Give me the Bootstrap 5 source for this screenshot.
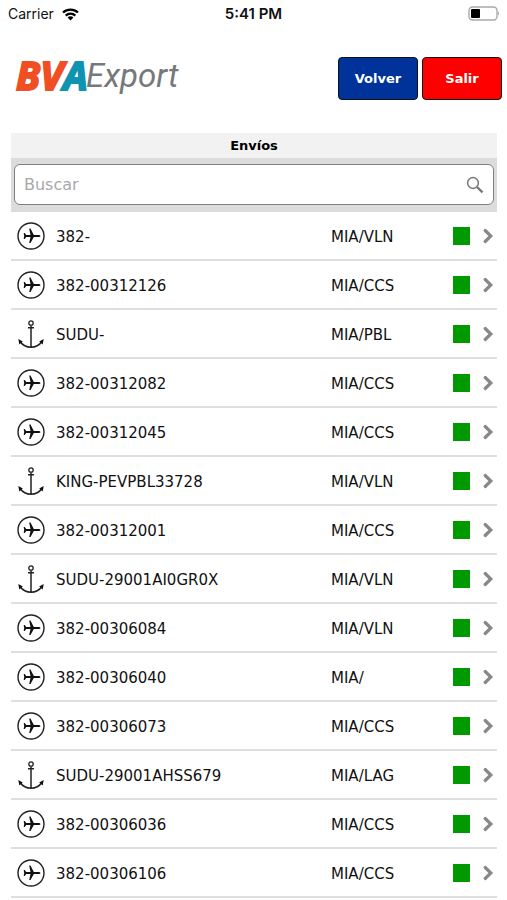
<!DOCTYPE html>
<html lang="es">
<head>
<meta charset="utf-8">
<meta name="viewport" content="width=device-width, initial-scale=1">
<title>BVA Export – Envíos</title>
<link href="https://cdn.jsdelivr.net/npm/bootstrap@5.3.0/dist/css/bootstrap.min.css" rel="stylesheet">
<style>
body { font-family: "DejaVu Sans", Verdana, sans-serif; font-size: 15px; line-height: 20px; color: #111; background: #fff; }
.status-bar { font-family: Inter, sans-serif; font-size: 14px; height: 28px; padding: 0 8px; }
.status-bar > * { flex: 1 1 0; }
.status-time { font-size: 15px; font-weight: 600; }
.app-header { padding: 20px 5px 0 14px; }
.logo-mark { font-family: "Liberation Sans Narrow", "Open Sans", sans-serif; font-size: 39px; font-weight: 700; font-style: italic; stroke-width: 2; }
.logo-word { font-family: Roboto, sans-serif; font-size: 33px; font-style: italic; }
.brand-orange { fill: #f04e23; stroke: #f04e23; }
.brand-teal { fill: #0e93b0; stroke: #0e93b0; }
.btn-app { width: 80px; height: 43px; padding: 0; border: 1px solid #111; border-radius: 4px; font-size: 13px; font-weight: 700; color: #fff; }
.btn-back { background: #039; }
.btn-exit { background: #f00; }
.shipments { margin: 24px 10px 0 11px; }
.panel-title { background: #f2f2f2; font-size: 13px; font-weight: 700; line-height: 25px; margin: 0; color: #000; }
.search-area { background: #dcdcdc; padding: 6px 3px 7px; }
.search-box { height: 41px; background: #fff; border: 1px solid #808080; border-radius: 6px; padding: 0 9px; }
.search-box input { font-size: 16px; line-height: 24px; height: 28px; outline: 0; color: #111; }
.search-box input::placeholder { color: #a9a9a9; opacity: 1; }
.list-group-flush > .shipment, .list-group-flush > .shipment:last-child { height: 49px; padding: 0 3px 0 6px; border-width: 0 0 2px; border-color: #dfdfdf; color: #111; }
.shipment .number { margin-left: 11px; padding-top: 3px; }
.shipment .route { width: 122px; padding-top: 3px; }
.state { width: 17px; height: 18px; background: #090; margin-right: 13px; }
</style>
</head>
<body>
<svg class="d-none" aria-hidden="true">
  <symbol id="plane" viewBox="0 0 28 28">
    <circle cx="14" cy="14" r="13" fill="none" stroke="#222" stroke-width="1.4"/>
    <path fill="#111" d="M23.500 14c0 .7-1 1.100-2.200 1.100h-4.500L13.500 21H12.200l1.300-5.900H9.200L7.700 17H6.700l.5-3-.5-3h1L9.200 12.900h4.300L12.200 6.500h1.300l3.300 6.400h4.500c1.200 0 2.200.4 2.200 1.100z"/>
  </symbol>
  <symbol id="anchor" viewBox="0 0 28 28">
    <g fill="none" stroke="#222">
      <circle cx="14" cy="3" r="2.200" stroke-width="1.300"/>
      <path stroke-width="1.500" d="M14 5.500v21.500M11 7.800h6M3 21.500c2.500 3.500 6.500 5.700 11 5.700s8.500-2.200 11-5.700"/>
    </g>
    <path fill="#111" d="M1.300 19l4.500 2.600-3.500 2.800zM26.700 19l-4.500 2.600 3.500 2.800z"/>
  </symbol>
  <symbol id="chevron" viewBox="0 0 11 16">
    <path d="M2.200 2.500l5.600 5.500-5.600 5.500" fill="none" stroke="#888" stroke-width="3.200" stroke-linecap="round"/>
  </symbol>
</svg>

<div class="status-bar d-flex align-items-center">
  <div class="d-flex align-items-center gap-2">Carrier
    <svg width="17" height="13" viewBox="0 0 17 13" fill="none" stroke="#000" stroke-width="2.300" aria-label="Wi-Fi"><path d="M1 4.500a11 11 0 0 1 15 0M3.700 7.600a7 7 0 0 1 9.600 0"/><path d="M8.500 12.500l-2.900-2.900a4 4 0 0 1 5.800 0z" fill="#000" stroke="none"/></svg>
  </div>
  <div class="status-time text-center">5:41 PM</div>
  <div class="d-flex justify-content-end">
    <svg width="31" height="16" viewBox="0 0 31 16" aria-label="Batería"><rect x="1" y="1" width="28" height="13" rx="3.500" fill="none" stroke="#aaa" stroke-width="1.400"/><rect x="3" y="3" width="9" height="9" rx="1" fill="#000"/><path d="M30 5.500v4c1-.4 1.300-3.600 0-4z" fill="#999"/></svg>
  </div>
</div>

<header class="app-header d-flex justify-content-between align-items-center">
  <svg width="176" height="61" viewBox="0 0 176 61" role="img" aria-label="BVA Export">
    <text class="logo-mark" x="2" y="42"><tspan class="brand-orange">BV</tspan><tspan class="brand-teal">A</tspan></text>
    <text class="logo-word" x="72" y="39" fill="#77787b">Export</text>
  </svg>
  <div class="d-flex gap-1">
    <button type="button" class="btn btn-app btn-back">Volver</button>
    <button type="button" class="btn btn-app btn-exit">Salir</button>
  </div>
</header>

<main class="shipments">
  <h1 class="panel-title text-center">Envíos</h1>
  <div class="search-area">
    <div class="search-box d-flex align-items-center">
      <label class="visually-hidden" for="buscar">Buscar</label>
      <input id="buscar" type="search" class="flex-grow-1 border-0 p-0 bg-transparent" placeholder="Buscar">
      <svg width="18" height="18" viewBox="0 0 18 18" fill="none" stroke="#777" aria-hidden="true"><circle cx="7" cy="7" r="5.400" stroke-width="1.500"/><path d="M11 11l5.500 5.300" stroke-width="2.400"/></svg>
    </div>
  </div>
  <div class="list-group list-group-flush">
    <a href="#" class="shipment list-group-item d-flex align-items-center"><svg width="28" height="28"><use href="#plane"/></svg><span class="number flex-grow-1">382-</span><span class="route">MIA/VLN</span><span class="state"></span><svg width="11" height="16"><use href="#chevron"/></svg></a>
    <a href="#" class="shipment list-group-item d-flex align-items-center"><svg width="28" height="28"><use href="#plane"/></svg><span class="number flex-grow-1">382-00312126</span><span class="route">MIA/CCS</span><span class="state"></span><svg width="11" height="16"><use href="#chevron"/></svg></a>
    <a href="#" class="shipment list-group-item d-flex align-items-center"><svg width="28" height="28"><use href="#anchor"/></svg><span class="number flex-grow-1">SUDU-</span><span class="route">MIA/PBL</span><span class="state"></span><svg width="11" height="16"><use href="#chevron"/></svg></a>
    <a href="#" class="shipment list-group-item d-flex align-items-center"><svg width="28" height="28"><use href="#plane"/></svg><span class="number flex-grow-1">382-00312082</span><span class="route">MIA/CCS</span><span class="state"></span><svg width="11" height="16"><use href="#chevron"/></svg></a>
    <a href="#" class="shipment list-group-item d-flex align-items-center"><svg width="28" height="28"><use href="#plane"/></svg><span class="number flex-grow-1">382-00312045</span><span class="route">MIA/CCS</span><span class="state"></span><svg width="11" height="16"><use href="#chevron"/></svg></a>
    <a href="#" class="shipment list-group-item d-flex align-items-center"><svg width="28" height="28"><use href="#anchor"/></svg><span class="number flex-grow-1">KING-PEVPBL33728</span><span class="route">MIA/VLN</span><span class="state"></span><svg width="11" height="16"><use href="#chevron"/></svg></a>
    <a href="#" class="shipment list-group-item d-flex align-items-center"><svg width="28" height="28"><use href="#plane"/></svg><span class="number flex-grow-1">382-00312001</span><span class="route">MIA/CCS</span><span class="state"></span><svg width="11" height="16"><use href="#chevron"/></svg></a>
    <a href="#" class="shipment list-group-item d-flex align-items-center"><svg width="28" height="28"><use href="#anchor"/></svg><span class="number flex-grow-1">SUDU-29001AI0GR0X</span><span class="route">MIA/VLN</span><span class="state"></span><svg width="11" height="16"><use href="#chevron"/></svg></a>
    <a href="#" class="shipment list-group-item d-flex align-items-center"><svg width="28" height="28"><use href="#plane"/></svg><span class="number flex-grow-1">382-00306084</span><span class="route">MIA/VLN</span><span class="state"></span><svg width="11" height="16"><use href="#chevron"/></svg></a>
    <a href="#" class="shipment list-group-item d-flex align-items-center"><svg width="28" height="28"><use href="#plane"/></svg><span class="number flex-grow-1">382-00306040</span><span class="route">MIA/</span><span class="state"></span><svg width="11" height="16"><use href="#chevron"/></svg></a>
    <a href="#" class="shipment list-group-item d-flex align-items-center"><svg width="28" height="28"><use href="#plane"/></svg><span class="number flex-grow-1">382-00306073</span><span class="route">MIA/CCS</span><span class="state"></span><svg width="11" height="16"><use href="#chevron"/></svg></a>
    <a href="#" class="shipment list-group-item d-flex align-items-center"><svg width="28" height="28"><use href="#anchor"/></svg><span class="number flex-grow-1">SUDU-29001AHSS679</span><span class="route">MIA/LAG</span><span class="state"></span><svg width="11" height="16"><use href="#chevron"/></svg></a>
    <a href="#" class="shipment list-group-item d-flex align-items-center"><svg width="28" height="28"><use href="#plane"/></svg><span class="number flex-grow-1">382-00306036</span><span class="route">MIA/CCS</span><span class="state"></span><svg width="11" height="16"><use href="#chevron"/></svg></a>
    <a href="#" class="shipment list-group-item d-flex align-items-center"><svg width="28" height="28"><use href="#plane"/></svg><span class="number flex-grow-1">382-00306106</span><span class="route">MIA/CCS</span><span class="state"></span><svg width="11" height="16"><use href="#chevron"/></svg></a>
  </div>
</main>
<script src="https://cdn.jsdelivr.net/npm/bootstrap@5.3.0/dist/js/bootstrap.bundle.min.js"></script>
</body>
</html>
